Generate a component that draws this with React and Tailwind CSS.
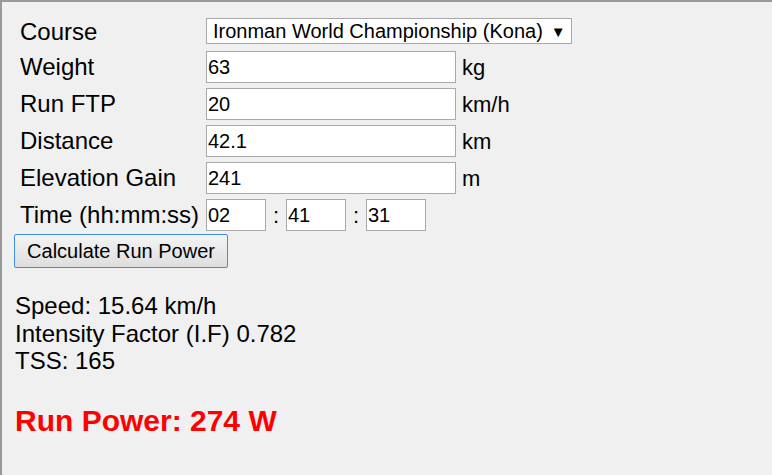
export default function App() {
  const rows = [
    { label: "Weight", value: "63", unit: "kg" },
    { label: "Run FTP", value: "20", unit: "km/h" },
    { label: "Distance", value: "42.1", unit: "km" },
    { label: "Elevation Gain", value: "241", unit: "m" },
  ];

  const inputCls =
    "h-[32px] border border-[#a9a9a9] bg-white px-[1px] text-[20px] text-black outline-none";

  return (
    <div className="min-h-[475px] border-t-2 border-l-2 border-[#9a9a9a] bg-[#f0f0f0] pl-[12px] pt-[12px] font-['Liberation_Sans',Arial,sans-serif] text-black">
      <div className="flex flex-col gap-[5px]">
        <div className="flex h-[32px] items-end pb-[2px]">
          <span className="mb-[-2px] w-[192px] pl-[6px] text-[24px] leading-[28px]">Course</span>
          <div className="flex h-[26px] w-[366px] items-center border border-[#a9a9a9] bg-white pl-[6px] text-[20px]">
            <span>Ironman World Championship (Kona)</span>
            <span className="ml-[8px] text-[15px] leading-none">▼</span>
          </div>
        </div>
        {rows.map((r) => (
          <div key={r.label} className="flex h-[32px] items-center">
            <span className="w-[192px] pl-[6px] text-[24px]">{r.label}</span>
            <input readOnly value={r.value} className={`${inputCls} w-[250px]`} />
            <span className="ml-[6px] text-[22px]">{r.unit}</span>
          </div>
        ))}
        <div className="flex h-[32px] items-center">
          <span className="w-[192px] pl-[6px] text-[24px]">Time (hh:mm:ss)</span>
          <input readOnly value="02" className={`${inputCls} w-[60px]`} />
          <span className="w-[20px] text-center text-[22px]">:</span>
          <input readOnly value="41" className={`${inputCls} w-[60px]`} />
          <span className="w-[20px] text-center text-[22px]">:</span>
          <input readOnly value="31" className={`${inputCls} w-[60px]`} />
        </div>
      </div>
      <button className="mt-[3px] h-[34px] w-[214px] rounded-[2px] border border-[#3d8ee6] bg-gradient-to-b from-[#f4f4f4] to-[#dedede] text-[20px] text-black">
        Calculate Run Power
      </button>
      <div className="mt-[24px] pl-[1px] text-[24px] leading-[1.15]">
        <div>Speed: 15.64 km/h</div>
        <div>Intensity Factor (I.F) 0.782</div>
        <div>TSS: 165</div>
      </div>
      <div className="mt-[29px] pl-[1px] text-[30px] font-bold leading-[1.15] text-[#ff0000]">
        Run Power: 274 W
      </div>
    </div>
  );
}
